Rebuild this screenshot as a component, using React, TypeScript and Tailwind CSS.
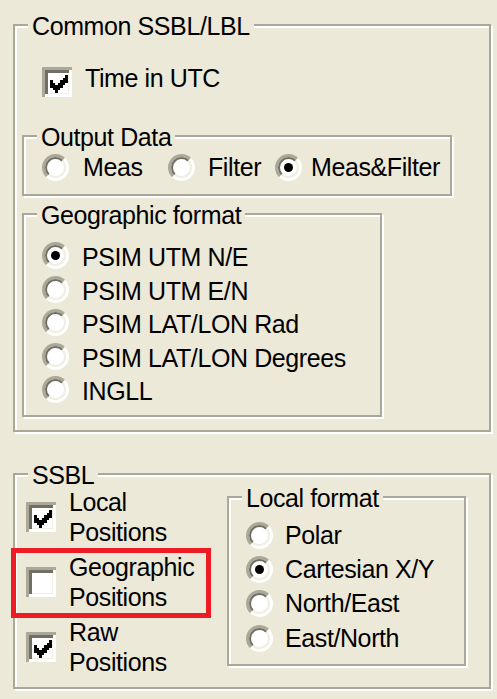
import React from "react";

type Kids = { children?: React.ReactNode };

// Etched group box with its caption sitting on the top edge
function Group({ title, className, children }: { title: string; className?: string } & Kids) {
  return (
    <div
      className={`relative shrink-0 border-2 border-[#aca899] shadow-[inset_2px_2px_0_0_#ffffff,2px_2px_0_0_#ffffff] ${className ?? ""}`}
    >
      <span className="absolute -top-[12px] left-[13px] bg-[#ece9d8] px-[4px] leading-[25px] whitespace-nowrap">
        {title}
      </span>
      {children}
    </div>
  );
}

function CheckMark() {
  return (
    <svg width="18" height="18" viewBox="0 0 7 7" shapeRendering="crispEdges">
      <path
        fill="#000"
        d="M6 0h1v1h-1z M5 1h2v1h-2z M0 2h1v1h-1z M4 2h3v1h-3z M0 3h2v1h-2z M3 3h3v1h-3z M0 4h5v1h-5z M1 5h3v1h-3z M2 6h1v1h-1z"
      />
    </svg>
  );
}

// Sunken 3D check box: light + dark shade on top/left, highlight on bottom/right
function CheckBox({ checked }: { checked: boolean }) {
  return (
    <div className="w-[30px] h-[30px] shrink-0 bg-white shadow-[inset_3px_3px_0_0_#aca899,inset_-3px_-3px_0_0_#ffffff,inset_6px_6px_0_0_#716f64,inset_-4px_-4px_0_0_#f1efe2] flex items-center justify-center pl-[3px] pt-[3px]">
      {checked && <CheckMark />}
    </div>
  );
}

function Radio({ checked }: { checked: boolean }) {
  return (
    <div className="w-[27px] h-[27px] shrink-0 rounded-full border-[3px] border-t-[#aca899] border-l-[#aca899] border-r-white border-b-white">
      <div className="w-full h-full rounded-full bg-white border-2 border-t-[#716f64] border-l-[#716f64] border-r-[#f1efe2] border-b-[#f1efe2] flex items-center justify-center">
        {checked && <div className="w-[9px] h-[9px] rounded-full bg-black" />}
      </div>
    </div>
  );
}

const geoFormats = [
  { label: "PSIM UTM N/E", on: true },
  { label: "PSIM UTM E/N", on: false },
  { label: "PSIM LAT/LON Rad", on: false },
  { label: "PSIM LAT/LON Degrees", on: false },
  { label: "INGLL", on: false },
];

const localFormats = [
  { label: "Polar", on: false },
  { label: "Cartesian X/Y", on: true },
  { label: "North/East", on: false },
  { label: "East/North", on: false },
];

const ssblItems = [
  { top: "Local", on: true },
  { top: "Geographic", on: false },
  { top: "Raw", on: true },
];

export default function App() {
  return (
    <div className="w-[497px] h-[699px] overflow-hidden bg-[#ece9d8] text-black text-[25px] leading-[25px] tracking-[-0.4px] font-['Liberation_Sans',Arial,sans-serif] pt-[24px] pl-[13px]">
      {/* Common SSBL/LBL */}
      <Group title="Common SSBL/LBL" className="w-[478px] h-[408px] flex flex-col">
        <div className="flex items-center ml-[27px] mt-[41px] gap-[13px]">
          <CheckBox checked />
          <span className="-mt-[7px] whitespace-nowrap">Time in UTC</span>
        </div>

        <Group title="Output Data" className="ml-[7px] mt-[38px] w-[430px] h-[61px]">
          <div className="flex items-center pl-[18px] pt-[17px]">
            <div className="flex items-center w-[126px] gap-[14px]">
              <Radio checked={false} />
              <span>Meas</span>
            </div>
            <div className="flex items-center w-[107px] gap-[13px]">
              <Radio checked={false} />
              <span>Filter</span>
            </div>
            <div className="flex items-center gap-[9px]">
              <Radio checked />
              <span className="whitespace-nowrap">Meas&amp;Filter</span>
            </div>
          </div>
        </Group>

        <Group title="Geographic format" className="ml-[7px] mt-[17px] w-[360px] h-[204px]">
          <div className="flex flex-col pl-[18px] pt-[24px]">
            {geoFormats.map((g) => (
              <div key={g.label} className="flex items-center h-[33.5px] gap-[13px]">
                <Radio checked={g.on} />
                <span className="mt-[4px] whitespace-nowrap">{g.label}</span>
              </div>
            ))}
          </div>
        </Group>
      </Group>

      {/* SSBL */}
      <Group title="SSBL" className="mt-[41px] w-[478px] h-[216px] flex items-start pl-[11px] pt-[12px]">
        <div className="w-[201px] shrink-0 flex flex-col gap-[5px]">
          {ssblItems.map((s) => (
            <div key={s.top} className="flex items-center gap-[13px]">
              <CheckBox checked={s.on} />
              <div className="leading-[30px] whitespace-nowrap">
                <div>{s.top}</div>
                <div>Positions</div>
              </div>
            </div>
          ))}
        </div>

        <Group title="Local format" className="mt-[9px] w-[239px] h-[170px]">
          <div className="flex flex-col pl-[17px] pt-[20px]">
            {localFormats.map((l) => (
              <div key={l.label} className="flex items-center h-[34.3px] gap-[12px]">
                <Radio checked={l.on} />
                <span className="whitespace-nowrap">{l.label}</span>
              </div>
            ))}
          </div>
        </Group>

        {/* highlight frame around the Geographic Positions option */}
        <div className="absolute left-[-4px] top-[73px] w-[200px] h-[70px] border-[5px] border-[#ed1c24] pointer-events-none" />
      </Group>
    </div>
  );
}
